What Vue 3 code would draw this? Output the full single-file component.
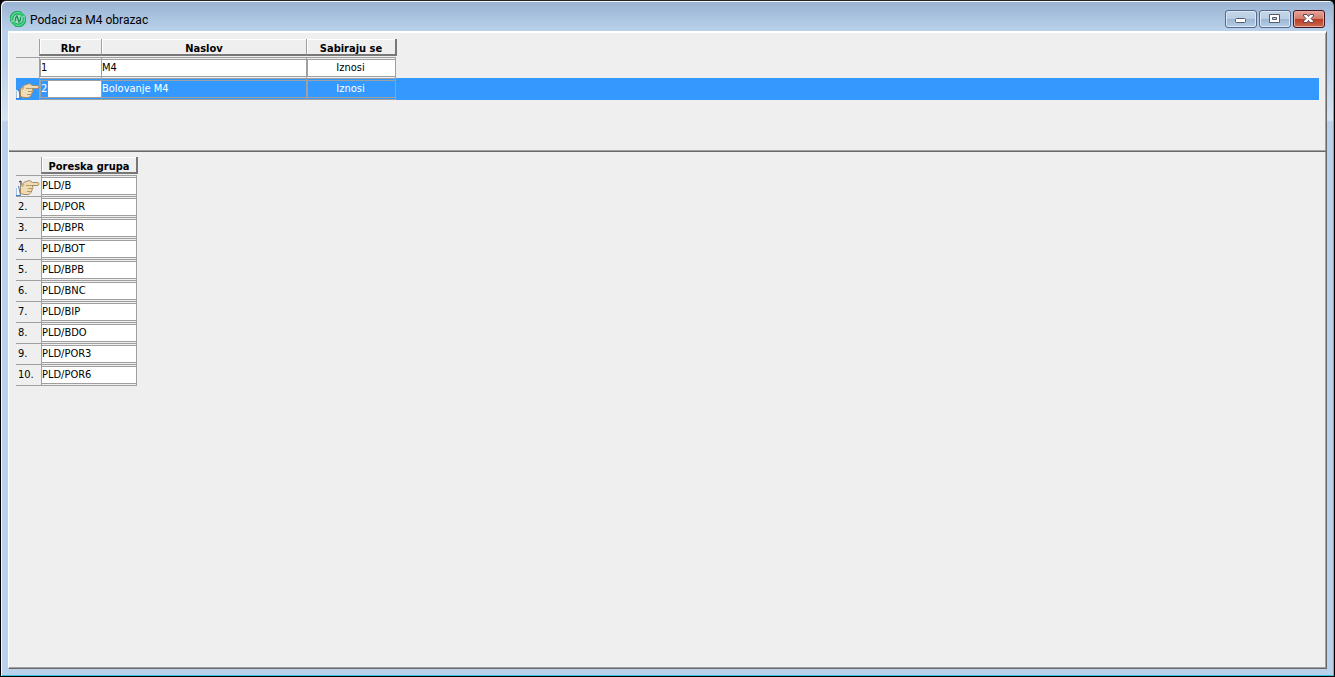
<script setup>
import { ref } from 'vue'

const reports = ref([
  { no: '1', title: 'M4', sum: 'Iznosi' },
  { no: '2', title: 'Bolovanje M4', sum: 'Iznosi' }
])
const active = ref(1)
const groups = ref(['PLD/B', 'PLD/POR', 'PLD/BPR', 'PLD/BOT', 'PLD/BPB', 'PLD/BNC', 'PLD/BIP', 'PLD/BDO', 'PLD/POR3', 'PLD/POR6'])
</script>

<template>
  <div class="window">
    <header class="titlebar">
      <svg class="logo" viewBox="0 0 16 16" aria-hidden="true">
        <circle cx="8" cy="8" r="5" fill="#a9dfc4" />
        <path d="M2 10A6 6 0 0 1 11 2.800M14 6a6 6 0 0 1-9 7.200" fill="none" stroke="#1da35d" stroke-width="3.600" />
        <path d="M2 10A6 6 0 0 1 11 2.800M14 6a6 6 0 0 1-9 7.200" fill="none" stroke="#52dd8e" stroke-width="1.600" />
        <path d="M10 0l5.500 4.500-5 1.500zM6 16L.5 11.500l5-1.500z" fill="#2fc672" />
        <path d="M5.500 10V7l1.500-2 2 6 1.500-2V6" fill="none" stroke="#179454" stroke-width="1.400" />
      </svg>
      <h1>Podaci za M4 obrazac</h1>
      <div class="controls">
        <button type="button" aria-label="Minimize">
          <svg viewBox="0 0 12 12"><rect x=".5" y="5.500" width="10" height="4" rx="1" fill="#fff" stroke="#555b6e" /></svg>
        </button>
        <button type="button" aria-label="Maximize">
          <svg viewBox="0 0 12 12"><path d="M.5 1.500h10v8H.5zM3.500 4.500v2h4v-2z" fill="#fff" fill-rule="evenodd" stroke="#555b6e" /></svg>
        </button>
        <button type="button" class="close" aria-label="Close">
          <svg viewBox="0 0 12 12"><path d="M.5 1.500h3.500L5.500 3.500 7 1.500h3.500v1.500L8 5.500l2.500 2.500v1.500H7L5.500 7.500 4 9.500H.5V8L3 5.500.5 3z" fill="#fff" stroke="#56485a" /></svg>
        </button>
      </div>
    </header>

    <main class="client">
      <section class="reports">
        <table>
          <thead>
            <tr>
              <td class="mark"></td>
              <th class="no" scope="col"><span>Rbr</span></th>
              <th class="title" scope="col"><span>Naslov</span></th>
              <th class="sum" scope="col"><span>Sabiraju se</span></th>
              <td class="rest"></td>
            </tr>
          </thead>
          <tbody>
            <tr v-for="(row, i) in reports" :key="i" :class="{ active: i === active }" @click="active = i">
              <td class="mark">
                <svg v-if="i === active" class="hand" viewBox="0 -1 24 18" aria-hidden="true">
                  <path d="M0 8l3 1v8H0z" fill="#fff" /><path d="M2.500 7l2 9.500H0M0 9v7" fill="none" stroke="#3f7fd0" />
                  <path d="M4.500 7l4-4 5-1.500 3 2H22q2 1.500 0 3h-6l1 2-1 2.500-1 2.500-2 2H8l-3.500-1z" fill="#f0dcb4" stroke="#a58a63" />
                  <path d="M10 6.500h6M12 9.500h5M11 12.500h4M8 5l-2 3" fill="none" stroke="#b9986a" />
                </svg>
              </td>
              <td class="cell inset"><input v-model="row.no" :aria-label="'Rbr ' + (i + 1)" :class="{ sel: i === active }" /></td>
              <td class="cell"><input v-model="row.title" :aria-label="'Naslov ' + (i + 1)" /></td>
              <td class="cell inset last"><input v-model="row.sum" class="center" :aria-label="'Sabiraju se ' + (i + 1)" /></td>
              <td class="rest"></td>
            </tr>
          </tbody>
        </table>
      </section>

      <section class="groups">
        <table>
          <thead>
            <tr>
              <td class="mark"></td>
              <th class="group" scope="col"><span>Poreska grupa</span></th>
            </tr>
          </thead>
          <tbody>
            <tr v-for="(g, i) in groups" :key="i">
              <td class="mark">
                <svg v-if="i === 0" class="hand" viewBox="0 -1 24 18" aria-hidden="true">
                  <path d="M3 3l2-1v5" fill="none" stroke="#222" />
                  <path d="M0 8l3 1v8H0z" fill="#fff" /><path d="M2.500 7l2 9.500H0M0 9v7" fill="none" stroke="#3f7fd0" />
                  <path d="M4.500 7l4-4 5-1.500 3 2H22q2 1.500 0 3h-6l1 2-1 2.500-1 2.500-2 2H8l-3.500-1z" fill="#f0dcb4" stroke="#a58a63" />
                  <path d="M10 6.500h6M12 9.500h5M11 12.500h4M8 5l-2 3" fill="none" stroke="#b9986a" />
                </svg>
                <span v-else>{{ i + 1 }}.</span>
              </td>
              <td class="cell last"><input v-model="groups[i]" :aria-label="'Poreska grupa ' + (i + 1)" /></td>
            </tr>
          </tbody>
        </table>
      </section>
    </main>
  </div>
</template>

<style>
body {
  background: #000;
}
</style>

<style scoped>
* {
  box-sizing: border-box;
}

.window {
  display: flex;
  flex-direction: column;
  height: 100vh;
  padding: 0 7px 7px;
  border: 1px solid #000;
  border-top-color: #222;
  border-radius: 6px 6px 0 0;
  background: linear-gradient(#98b2d1, #b9d1ea 30px, #b9d1ea 60px, #d7e4f2 119px, #b9d1ea 121px);
  box-shadow: inset 1px 1px #f2f7fc, inset -1px -1px #35c4dc;
  font-family: "DejaVu Sans Condensed", "Open Sans", sans-serif;
  font-size: 11px;
  color: #000;
}

.titlebar {
  display: flex;
  align-items: center;
  flex: none;
  height: 30px;
  padding: 6px 2px 0;
}

.logo {
  width: 16px;
  height: 16px;
}

h1 {
  flex: 1;
  margin: 2px 0 0 4px;
  font: 12px/16px Roboto, "Open Sans", sans-serif;
}

.controls {
  display: flex;
  gap: 2px;
}

.controls button {
  display: flex;
  align-items: center;
  justify-content: center;
  width: 32px;
  height: 18px;
  padding: 0;
  border: 1px solid #56698a;
  border-radius: 3px;
  background: linear-gradient(#c5d6e9, #b9cde4 50%, #9bb5d2 50%, #b5cee8);
  box-shadow: inset 0 0 0 1px #dbe7f4;
}

.controls .close {
  border-color: #431422;
  background: linear-gradient(#e6a396, #d37a69 50%, #b83b24 50%, #cc6a4b);
  box-shadow: inset 0 0 0 1px #e8aaa0;
}

.controls svg {
  width: 12px;
  height: 12px;
}

.client {
  display: flex;
  flex: 1;
  flex-direction: column;
  border: 1px solid #fff;
  border-right: 1px solid #696969;
  border-bottom: 1px solid #696969;
  background: #efefef;
  box-shadow: inset -1px -1px #a0a0a0;
}

.reports {
  height: 120px;
  padding: 6px 7px 0;
  border-top: 1px solid #fff;
  border-bottom: 1px solid #696969;
  box-shadow: inset 0 -1px #a0a0a0;
}

.groups {
  flex: 1;
  padding: 5px 7px;
}

table {
  border-collapse: separate;
  border-spacing: 0;
  table-layout: fixed;
}

.reports table {
  width: 100%;
}

.groups table {
  width: 121px;
}

td, th {
  padding: 0;
  vertical-align: top;
}

.reports .mark {
  width: 23px;
}

.groups .mark {
  width: 25px;
}

.no {
  width: 62px;
}

.title {
  width: 205px;
}

.sum {
  width: 90px;
}

th {
  height: 18px;
  padding-bottom: 1px;
  font-weight: bold;
}

th span {
  display: block;
  height: 17px;
  border-left: 1px solid #a0a0a0;
  border-bottom: 2px solid #777;
  box-shadow: inset 1px 1px #fff;
  line-height: 19px;
}

.sum span, .group span {
  margin-right: -1px;
  border-right: 2px solid #777;
}

tbody td {
  height: 21px;
  border-top: 1px solid #a0a0a0;
}

tbody .rest {
  border-top: 0;
}

.groups tbody tr:last-child td {
  height: 22px;
  border-bottom: 1px solid #a0a0a0;
}

.reports tbody tr:last-child td {
  height: 22px;
}

.reports tbody tr:last-child .cell {
  border-bottom: 1px solid #a0a0a0;
}

.mark span {
  display: block;
  padding-left: 2px;
  line-height: 20px;
}

.hand {
  display: block;
  width: 24px;
  height: 18px;
  margin-top: 2px;
}

.cell {
  padding: 1px 0;
  border-left: 1px solid #a0a0a0;
}

.last {
  border-right: 1px solid #a0a0a0;
}

input {
  display: block;
  width: 100%;
  height: 18px;
  margin: 0;
  padding: 0 0 1px;
  border: solid #a0a0a0;
  border-width: 1px 0;
  border-radius: 0;
  outline: 0;
  background: #fff;
  color: #000;
  font: inherit;
}

.inset input {
  border-left-width: 1px;
}

.center {
  padding-right: 2px;
  text-align: center;
}

.active td {
  background: #3399ff;
}

.active .mark {
  border-top-color: #3399ff;
}

.active input {
  background: #3399ff;
  color: #fff;
}

.active .sel {
  background: linear-gradient(90deg, #3399ff 7px, #fff 7px);
}
</style>
